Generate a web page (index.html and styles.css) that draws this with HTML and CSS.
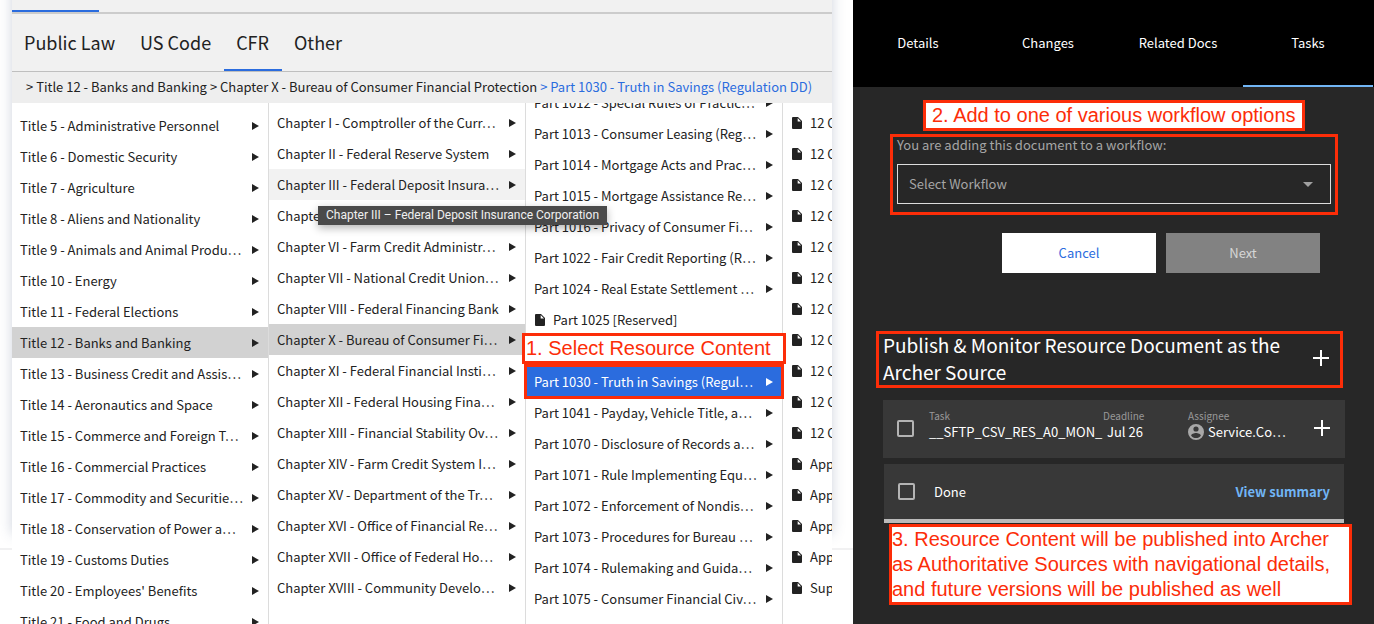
FILE: index.html
```html
<!doctype html>
<html lang="en">
<head>
    <meta charset="utf-8"/>
    <title>Resource Content</title>
    <link rel="stylesheet" href="styles.css">
</head>
<body>
    <svg class="defs" aria-hidden="true">
        <symbol id="file" viewBox="0 0 10 12"><path d="M1 0h5l4 4v7a1 1 0 0 1-1 1H1a1 1 0 0 1-1-1V1a1 1 0 0 1 1-1z"/><path d="M5.7 1v3.4h3.3z" fill="#fff"/></symbol>
        <symbol id="plus" viewBox="0 0 16 16"><path d="M7 0h2v7h7v2H9v7H7V9H0V7h7z"/></symbol>
        <symbol id="user" viewBox="0 0 16 16"><path fill-rule="evenodd" d="M8 0a8 8 0 1 1 0 16A8 8 0 0 1 8 0zm0 2.4a2.6 2.6 0 1 0 0 5.2 2.6 2.6 0 0 0 0-5.2zM8 9c-2 0-4.8 1-4.8 2.7C4.3 13.2 6 14 8 14s3.7-.8 4.8-2.3C12.8 10 10 9 8 9z"/></symbol>
    </svg>

    <main class="library">
        <div class="browser">
            <div class="topbar"><span class="topbar-active"></span></div>
            <nav class="tabs">
                <a href="#">Public Law</a>
                <a href="#">US Code</a>
                <a href="#" class="active">CFR</a>
                <a href="#">Other</a>
            </nav>
            <nav class="crumbs">
                <a href="#">&gt; Title 12 - Banks and Banking</a>
                <a href="#">&gt; Chapter X - Bureau of Consumer Financial Protection</a>
                <a href="#" class="current">&gt; Part 1030 - Truth in Savings (Regulation DD)</a>
            </nav>
            <div class="columns">
                <ul class="column titles">
                    <li><a href="#">Title 5 - Administrative Personnel</a></li>
                    <li><a href="#">Title 6 - Domestic Security</a></li>
                    <li><a href="#">Title 7 - Agriculture</a></li>
                    <li><a href="#">Title 8 - Aliens and Nationality</a></li>
                    <li><a href="#">Title 9 - Animals and Animal Produ…</a></li>
                    <li><a href="#">Title 10 - Energy</a></li>
                    <li><a href="#">Title 11 - Federal Elections</a></li>
                    <li class="open"><a href="#">Title 12 - Banks and Banking</a></li>
                    <li><a href="#">Title 13 - Business Credit and Assis…</a></li>
                    <li><a href="#">Title 14 - Aeronautics and Space</a></li>
                    <li><a href="#">Title 15 - Commerce and Foreign T…</a></li>
                    <li><a href="#">Title 16 - Commercial Practices</a></li>
                    <li><a href="#">Title 17 - Commodity and Securitie…</a></li>
                    <li><a href="#">Title 18 - Conservation of Power a…</a></li>
                    <li><a href="#">Title 19 - Customs Duties</a></li>
                    <li><a href="#">Title 20 - Employees' Benefits</a></li>
                    <li><a href="#">Title 21 - Food and Drugs</a></li>
                </ul>
                <ul class="column chapters">
                    <li><a href="#">Chapter I - Comptroller of the Curr…</a></li>
                    <li><a href="#">Chapter II - Federal Reserve System</a></li>
                    <li class="hover">
                        <a href="#">Chapter III - Federal Deposit Insura…</a>
                        <span class="tooltip" role="tooltip">Chapter III – Federal Deposit Insurance Corporation</span>
                    </li>
                    <li><a href="#">Chapter V</a></li>
                    <li><a href="#">Chapter VI - Farm Credit Administr…</a></li>
                    <li><a href="#">Chapter VII - National Credit Union…</a></li>
                    <li><a href="#">Chapter VIII - Federal Financing Bank</a></li>
                    <li class="open"><a href="#">Chapter X - Bureau of Consumer Fi…</a></li>
                    <li><a href="#">Chapter XI - Federal Financial Insti…</a></li>
                    <li><a href="#">Chapter XII - Federal Housing Fina…</a></li>
                    <li><a href="#">Chapter XIII - Financial Stability Ov…</a></li>
                    <li><a href="#">Chapter XIV - Farm Credit System I…</a></li>
                    <li><a href="#">Chapter XV - Department of the Tr…</a></li>
                    <li><a href="#">Chapter XVI - Office of Financial Re…</a></li>
                    <li><a href="#">Chapter XVII - Office of Federal Ho…</a></li>
                    <li><a href="#">Chapter XVIII - Community Develo…</a></li>
                </ul>
                <ul class="column parts">
                    <li><a href="#">Part 1012 - Special Rules of Practic…</a></li>
                    <li><a href="#">Part 1013 - Consumer Leasing (Reg…</a></li>
                    <li><a href="#">Part 1014 - Mortgage Acts and Prac…</a></li>
                    <li><a href="#">Part 1015 - Mortgage Assistance Re…</a></li>
                    <li><a href="#">Part 1016 - Privacy of Consumer Fi…</a></li>
                    <li><a href="#">Part 1022 - Fair Credit Reporting (R…</a></li>
                    <li><a href="#">Part 1024 - Real Estate Settlement …</a></li>
                    <li class="doc"><a href="#"><svg><use href="#file"/></svg>Part 1025 [Reserved]</a></li>
                    <li></li>
                    <li class="selected">
                        <a href="#">Part 1030 - Truth in Savings (Regul…</a>
                        <strong class="note note-select">1. Select Resource Content</strong>
                    </li>
                    <li><a href="#">Part 1041 - Payday, Vehicle Title, a…</a></li>
                    <li><a href="#">Part 1070 - Disclosure of Records a…</a></li>
                    <li><a href="#">Part 1071 - Rule Implementing Equ…</a></li>
                    <li><a href="#">Part 1072 - Enforcement of Nondis…</a></li>
                    <li><a href="#">Part 1073 - Procedures for Bureau …</a></li>
                    <li><a href="#">Part 1074 - Rulemaking and Guida…</a></li>
                    <li><a href="#">Part 1075 - Consumer Financial Civ…</a></li>
                    <li><a href="#">Part 1076 - Claims Against the Unit…</a></li>
                </ul>
                <ul class="column sections">
                    <li class="doc"><a href="#"><svg><use href="#file"/></svg>12 CFR</a></li>
                    <li class="doc"><a href="#"><svg><use href="#file"/></svg>12 CFR</a></li>
                    <li class="doc"><a href="#"><svg><use href="#file"/></svg>12 CFR</a></li>
                    <li class="doc"><a href="#"><svg><use href="#file"/></svg>12 CFR</a></li>
                    <li class="doc"><a href="#"><svg><use href="#file"/></svg>12 CFR</a></li>
                    <li class="doc"><a href="#"><svg><use href="#file"/></svg>12 CFR</a></li>
                    <li class="doc"><a href="#"><svg><use href="#file"/></svg>12 CFR</a></li>
                    <li class="doc"><a href="#"><svg><use href="#file"/></svg>12 CFR</a></li>
                    <li class="doc"><a href="#"><svg><use href="#file"/></svg>12 CFR</a></li>
                    <li class="doc"><a href="#"><svg><use href="#file"/></svg>12 CFR</a></li>
                    <li class="doc"><a href="#"><svg><use href="#file"/></svg>12 CFR</a></li>
                    <li class="doc"><a href="#"><svg><use href="#file"/></svg>Appendix</a></li>
                    <li class="doc"><a href="#"><svg><use href="#file"/></svg>Appendix</a></li>
                    <li class="doc"><a href="#"><svg><use href="#file"/></svg>Appendix</a></li>
                    <li class="doc"><a href="#"><svg><use href="#file"/></svg>Appendix</a></li>
                    <li class="doc"><a href="#"><svg><use href="#file"/></svg>Supplement</a></li>
                </ul>
            </div>
        </div>
    </main>

    <aside class="panel">
        <nav class="panel-tabs">
            <a href="#">Details</a>
            <a href="#">Changes</a>
            <a href="#">Related Docs</a>
            <a href="#" class="active">Tasks</a>
        </nav>
        <div class="panel-body">
            <div class="workflow">
                <strong class="note note-workflow">2. Add to one of various workflow options</strong>
                <label for="workflow">You are adding this document to a workflow:</label>
                <div class="select">
                    <select id="workflow"><option>Select Workflow</option></select>
                </div>
            </div>
            <div class="actions">
                <button type="button" class="cancel">Cancel</button>
                <button type="button" class="next">Next</button>
            </div>
            <div class="publish">
                <h2>Publish &amp; Monitor Resource Document as the Archer Source</h2>
                <button type="button" class="add" aria-label="Add workflow"><svg><use href="#plus"/></svg></button>
            </div>
            <div class="task">
                <input type="checkbox" aria-label="Select task">
                <dl>
                    <div class="name"><dt>Task</dt><dd>__SFTP_CSV_RES_A0_MON_</dd></div>
                    <div class="deadline"><dt>Deadline</dt><dd>Jul 26</dd></div>
                    <div class="assignee"><dt>Assignee</dt><dd><svg><use href="#user"/></svg>Service.Co…</dd></div>
                </dl>
                <button type="button" class="add" aria-label="Add task"><svg><use href="#plus"/></svg></button>
            </div>
            <div class="done">
                <input type="checkbox" id="done">
                <label for="done">Done</label>
                <a href="#">View summary</a>
                <strong class="note note-publish">3. Resource Content will be published into Archer as Authoritative Sources with navigational details, and future versions will be published as well</strong>
            </div>
        </div>
    </aside>
</body>
</html>
```
FILE: styles.css
```css
* {
    box-sizing:border-box;
}
body {
    margin:0;
    height:100vh;
    display:flex;
    overflow:hidden;
    background:#ffffff;
    color:#222222;
    font:13px/20px "Noto Sans CJK SC", "Noto Sans", sans-serif;
}
a {
    color:inherit;
    text-decoration:none;
}
button, select {
    font:inherit;
}
svg {
    fill:currentColor;
    flex:none;
}
.defs {
    position:absolute;
    width:0;
    height:0;
}

/* library browser */
.library {
    flex:1;
    min-width:0;
    display:flex;
    padding:0 21px 0 12px;
    background:linear-gradient(#f1f1f2, #f1f1f2) 0 548px / 100% 2px no-repeat;
}
.browser {
    flex:1;
    min-width:0;
    display:flex;
    flex-direction:column;
    background:#ffffff;
    box-shadow:0 -90px 12px rgba(60, 80, 120, .25);
}
.topbar {
    flex:none;
    display:flex;
    align-items:flex-end;
    height:14px;
    border-bottom:2px solid #cccccc;
    background:#f1f1f1;
}
.topbar-active {
    width:87px;
    height:2px;
    background:#2b6cde;
}
.tabs {
    flex:none;
    display:flex;
    height:58px;
    border-bottom:1px solid #bfbfbf;
    background:#f1f1f1;
    font-size:18px;
    line-height:56px;
}
.tabs a {
    padding:0 13px 0 12px;
}
.tabs a.active {
    border-bottom:2px solid #2b6cde;
}
.crumbs {
    flex:none;
    padding:0 14px;
    height:31px;
    background:#eeeeee;
    line-height:30px;
    white-space:nowrap;
}
.crumbs .current {
    color:#2b6cde;
}
.columns {
    flex:1;
    min-height:0;
    display:flex;
    overflow:hidden;
}
.column {
    flex:0 0 257px;
    min-width:0;
    margin:0;
    padding:0;
    list-style:none;
    border-right:1px solid #dcdcdc;
}
.column li {
    position:relative;
    height:31px;
    line-height:31px;
    white-space:nowrap;
}
.column li > a {
    display:flex;
    align-items:center;
    justify-content:space-between;
    padding:0 9px 0 8px;
}
.column li > a::after {
    content:"";
    border-left:7px solid;
    border-top:4px solid transparent;
    border-bottom:4px solid transparent;
}
.column .doc > a {
    justify-content:flex-start;
    gap:8px;
    padding-left:9px;
}
.column .doc > a::after {
    content:none;
}
.doc svg {
    width:10px;
    height:12px;
}
.column .open {
    background:#d2d2d2;
}
.column .hover {
    background:#f2f2f2;
}
.column .selected {
    background:#2b6cde;
    color:#ffffff;
    outline:3px solid #fc2d08;
    outline-offset:-1px;
}
.titles {
    padding-top:7px;
}
.chapters {
    padding-top:4px;
}
.parts {
    margin-top:-16px;
}
.sections {
    flex:1;
    padding-top:4px;
    overflow:hidden;
    border:0;
}

.tooltip {
    position:absolute;
    z-index:2;
    top:37px;
    left:49px;
    padding:0 8px;
    background:#4a4a4a;
    box-shadow:0 3px 8px rgba(0, 0, 0, .3);
    color:#f0f0f0;
    font:12px/19px Roboto, sans-serif;
}

/* numbered notes */
.note {
    position:absolute;
    z-index:3;
    border:3px solid #fc2d08;
    background:#ffffff;
    color:#fc2d08;
    font:20px/25px "Liberation Sans", Arial, sans-serif;
}
.note-select {
    top:-33px;
    left:-4px;
    padding:0 12px 0 1px;
}
.note-workflow {
    top:-37px;
    left:30px;
    padding:0 6px;
    white-space:nowrap;
}
.note-publish {
    top:60px;
    left:5px;
    right:-8px;
}

/* workflow panel */
.panel {
    flex:0 0 521px;
    background:#272727;
    color:#ffffff;
}
.panel-tabs {
    display:flex;
    padding-right:1px;
    height:87px;
    background:#000000;
    line-height:86px;
    text-align:center;
}
.panel-tabs a {
    flex:1;
}
.panel-tabs a.active {
    border-bottom:2px solid #71b5f5;
}
.panel-body {
    padding:47px 29px 0 30px;
}
.workflow {
    position:relative;
    margin:0 7px;
    padding:0 4px 8px;
    border:3px solid #fc2d08;
}
.workflow label {
    display:block;
    color:#a5a5a5;
    line-height:16px;
}
.select {
    position:relative;
    margin-top:11px;
}
.select::after {
    content:"";
    position:absolute;
    top:18px;
    right:18px;
    border-top:5px solid #a0a0a0;
    border-left:5px solid transparent;
    border-right:5px solid transparent;
}
.select select {
    display:block;
    width:100%;
    height:40px;
    padding:0 11px;
    border:1px solid #dddddd;
    border-radius:0;
    background:transparent;
    color:#a5a5a5;
    appearance:none;
}
.actions {
    display:flex;
    justify-content:flex-end;
    gap:10px;
    margin:18px 25px 0 0;
}
.actions button {
    width:154px;
    height:40px;
    border:0;
}
.cancel {
    background:#ffffff;
    color:#2b6cde;
}
.next {
    background:#828282;
    color:#d6d6d6;
}
.publish {
    position:relative;
    display:flex;
    align-items:center;
    justify-content:space-between;
    margin-top:58px;
    padding:0 16px 3px 0;
}
.publish::after {
    content:"";
    position:absolute;
    inset:0 2px 0 -7px;
    border:3px solid #fc2d08;
    pointer-events:none;
}
.publish h2 {
    margin:0;
    width:410px;
    font-size:19px;
    font-weight:400;
    line-height:27px;
}
.add {
    display:flex;
    padding:0;
    border:0;
    background:none;
    color:#ffffff;
}
.add svg {
    width:16px;
    height:16px;
}
input[type=checkbox] {
    flex:none;
    margin:0;
    width:17px;
    height:17px;
    border:2px solid #b4b4b4;
    border-radius:2px;
    appearance:none;
}
.task {
    display:flex;
    align-items:center;
    margin-top:12px;
    padding:0 15px 2px 14px;
    height:58px;
    background:#383838;
}
.task dl {
    flex:1;
    display:flex;
    margin:0 0 0 15px;
    padding-bottom:6px;
}
.task dt {
    color:#999999;
    font-size:10px;
    line-height:14px;
}
.task dd {
    display:flex;
    align-items:center;
    gap:4px;
    margin:0;
    line-height:18px;
    white-space:nowrap;
}
.task dd svg {
    width:16px;
    height:16px;
    color:#a8a8a8;
}
.name {
    width:174px;
}
.deadline {
    width:85px;
}
.deadline dd {
    padding-left:4px;
}
.done {
    position:relative;
    display:flex;
    align-items:center;
    margin:6px 1px 0;
    padding:0 14px;
    height:59px;
    border-bottom:4px solid #bbbbbb;
    background:#383838;
}
.done label {
    flex:1;
    margin-left:19px;
}
.done a {
    color:#71b5f5;
    font-weight:700;
}
```
